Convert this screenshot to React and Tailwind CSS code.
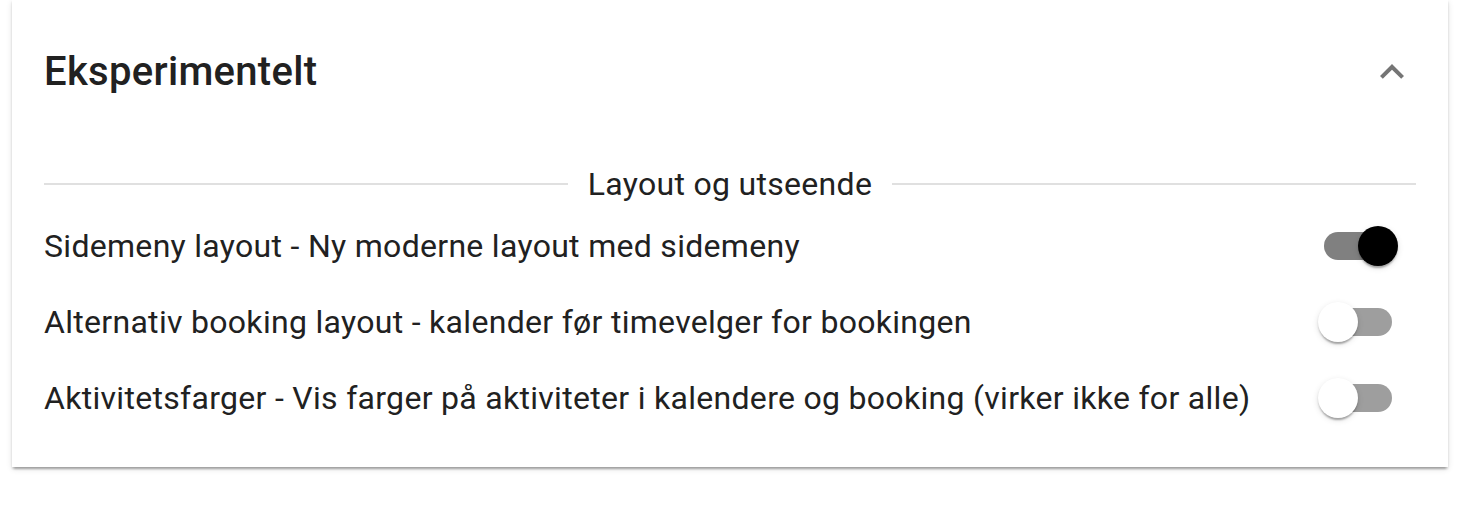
import { useState } from 'react'

const rows = [
  { label: 'Sidemeny layout - Ny moderne layout med sidemeny', on: true },
  { label: 'Alternativ booking layout - kalender før timevelger for bookingen', on: false },
  { label: 'Aktivitetsfarger - Vis farger på aktiviteter i kalendere og booking (virker ikke for alle)', on: false },
]

const Toggle = ({ checked, onChange }) => (
  <button
    type="button"
    onClick={onChange}
    className="relative w-[116px] h-[76px] shrink-0 p-[24px]"
    aria-pressed={checked}
  >
    <span className={`block w-full h-full rounded-[14px] ${checked ? 'bg-[#808080]' : 'bg-[#9e9e9e]'}`} />
    <span
      className={`absolute top-[18px] w-[40px] h-[40px] rounded-full shadow-[0_4px_2px_-2px_rgba(0,0,0,0.2),0_2px_2px_0_rgba(0,0,0,0.14),0_2px_6px_0_rgba(0,0,0,0.12)] ${
        checked ? 'left-[58px] bg-black' : 'left-[18px] bg-white'
      }`}
    />
  </button>
)

export default function App() {
  const [settings, setSettings] = useState(rows.map(r => r.on))

  return (
    <div className="min-h-screen bg-white font-['Roboto',sans-serif] text-[#212121]">
      <div className="ml-[12px] w-[1436px] bg-white shadow-[0_4px_2px_-2px_rgba(0,0,0,0.2),0_2px_2px_0_rgba(0,0,0,0.14),0_2px_6px_0_rgba(0,0,0,0.12)]">
        <div className="flex items-center justify-between h-[144px] px-[32px]">
          <h2 className="text-[40px] font-medium leading-[64px] tracking-[0.3px]">Eksperimentelt</h2>
          <svg viewBox="0 0 24 24" className="w-[48px] h-[48px]" fill="#757575" aria-hidden="true">
            <path d="M12 8l-6 6 1.41 1.41L12 10.83l4.59 4.58L18 14z" />
          </svg>
        </div>

        <div className="px-[32px] pt-[16px] pb-[31px]">
          <div className="flex items-center h-[48px]">
            <div className="flex-1 h-[2px] bg-[#e0e0e0]" />
            <span className="px-[20px] text-[32px] leading-[48px] tracking-[0.3px]">Layout og utseende</span>
            <div className="flex-1 h-[2px] bg-[#e0e0e0]" />
          </div>

          {rows.map((row, i) => (
            <div key={i} className="flex items-center justify-between h-[76px]">
              <span className="text-[32px] leading-[48px] tracking-[0.3px]">{row.label}</span>
              <Toggle
                checked={settings[i]}
                onChange={() => setSettings(s => s.map((v, j) => (j === i ? !v : v)))}
              />
            </div>
          ))}
        </div>
      </div>
    </div>
  )
}
